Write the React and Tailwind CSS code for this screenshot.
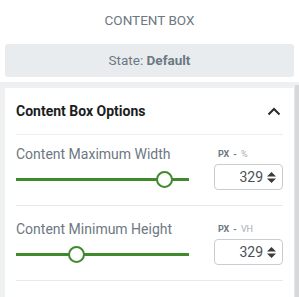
import React from 'react';

const rows = [
  { label: 'Content Maximum Width', unit: '%', value: 329, pos: 148, first: true },
  { label: 'Content Minimum Height', unit: 'VH', value: 329, pos: 60, first: false }
];

function Spinner() {
  return (
    <svg width="11" height="13" viewBox="0 0 11 13" className="ml-[3px]">
      <path d="M1 5.5 L5.5 1 L10 5.5 Z" fill="#3a3a3a" />
      <path d="M1 7.5 L5.5 12 L10 7.5 Z" fill="#3a3a3a" />
    </svg>
  );
}

function ControlRow({ row }) {
  return (
    <div className={`mx-[11px] border-b border-[#e6e9ec] ${row.first ? 'pt-[11px]' : 'pt-[15px]'} pb-[15px]`}>
      <div className="flex items-center">
        <div className="flex-1 text-[14px] leading-[17px] text-[#6d7882]">{row.label}</div>
        <div className="w-[69px] pl-[4px] text-[9px] font-bold leading-[17px]">
          <span className="text-[#6d7882]">PX</span>
          <span className="text-[#6d7882] mx-[4px]">-</span>
          <span className="text-[#a4afb7] font-normal">{row.unit}</span>
        </div>
      </div>
      <div className="flex items-center mt-[1px]">
        <div className="w-[173px] mt-[4px]">
          <div className="relative h-[3px] bg-[#3e8a2d]">
            <div
              className="absolute top-[-7px] w-[17px] h-[17px] rounded-full bg-white border-2 border-[#3e8a2d]"
              style={{ left: row.pos - 8 }}
            />
          </div>
        </div>
        <div className="flex-1" />
        <div className="w-[69px] h-[26px] border border-[#c8cdd2] rounded-[4px] flex items-center justify-end pr-[5px] text-[14px] text-[#495157]">
          {row.value}
          <Spinner />
        </div>
      </div>
    </div>
  );
}

export default function App() {
  return (
    <div className="w-[299px] h-[297px] overflow-hidden bg-white font-['Roboto',sans-serif]">
      <div className="h-[40px] flex items-center justify-center text-[13.5px] text-[#6d7882]">CONTENT BOX</div>
      <div className="mx-[5px] mt-[4px] h-[33px] rounded-[3px] bg-[#e9ecef] flex items-center justify-center text-[13.5px] text-[#6d7882]">
        State:&nbsp;<b className="font-bold">Default</b>
      </div>
      <div className="mt-[5px] h-[215px] bg-[#eef0f2] flex">
        <div className="ml-[5px] mt-[6px] flex-1 bg-white border-r border-[#e3e6e9]">
          <div className="h-[47px] mx-[11px] border-b border-[#eceef0] flex items-center justify-between">
            <div className="text-[14px] font-bold text-[#1b1d1f]">Content Box Options</div>
            <svg width="14" height="9" viewBox="0 0 14 9" className="mr-[2px]">
              <path d="M1.5 7.5 L7 2 L12.5 7.5" stroke="#2a2a2a" strokeWidth="2" fill="none" />
            </svg>
          </div>
          {rows.map((r) => (
            <ControlRow key={r.label} row={r} />
          ))}
        </div>
        <div className="w-[4px] mt-[3px] bg-[#d6d8da]" />
      </div>
    </div>
  );
}
